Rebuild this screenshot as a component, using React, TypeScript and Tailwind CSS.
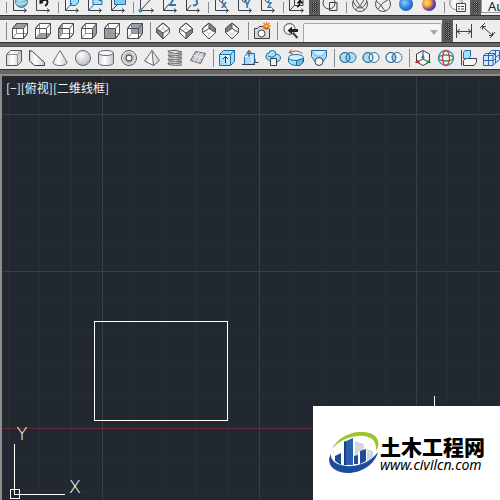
import type { ReactNode } from "react";

type Item = { name: string; art: ReactNode } | "sep";

const INK = "#3b4148";
const STEEL = "#8b9097";
const SKY = "#a9dcf7";
const DEEP = "#1f6fa8";

/** Wireframe cube with one shaded face (orthographic view buttons). */
function Cube({ face }: { face: string }) {
  return (
    <g stroke="#4b5056" fill="none" strokeLinejoin="round">
      <path d="M3.5 8.5L7.5 3.5H18.5V13.5L14.5 18.5H3.5Z" fill="#fff" />
      <path d={face} fill="#9a9fa6" stroke="none" />
      <path d="M7.5 3.5V13.5H18.5M7.5 13.5L3.5 18.5" stroke="#8a8f96" />
      <path d="M3.5 8.5L7.5 3.5H18.5V13.5L14.5 18.5H3.5Z" />
      <path d="M3.5 8.5H14.5V18.5M14.5 8.5L18.5 3.5" />
    </g>
  );
}

/** Isometric view button; `back` shows the far corner instead of the near one. */
function Iso({ face, back }: { face: string; back?: boolean }) {
  return (
    <g stroke="#4b5056" fill="none" strokeLinejoin="round">
      <path d="M10 3L16.5 8.5V12.5L10 19L3.5 12.5V8.5Z" fill="#fff" />
      <path d={face} fill="#80858c" stroke="none" />
      <path d="M10 3L16.5 8.5V12.5L10 19L3.5 12.5V8.5Z" />
      <path d={back ? "M10 3V8.5M10 8.5L3.5 12.5M10 8.5L16.5 12.5" : "M3.5 8.5L10 13L16.5 8.5M10 13V19"} />
      <path d={back ? "M3.5 8.5L10 14L16.5 8.5M10 14V19" : "M10 3V8.5M10 8.5L3.5 12.5M10 8.5L16.5 12.5"} strokeOpacity="0.35" />
    </g>
  );
}

/** Coordinate-system axes used as the base of every UCS button. */
function Axes({ children }: { children?: ReactNode }) {
  return (
    <g fill="none" stroke={INK}>
      <path d="M4.5 2V17.5H17M15 15.5L17.5 17.5L15 19.5" />
      {children}
    </g>
  );
}

function AxisLetter({ letter }: { letter: string }) {
  return (
    <g>
      <path d="M4.5 4V17.5H17M15 15.5L17.5 17.5L15 19.5M8 7L10 9.5L12 8V5" fill="none" stroke={INK} />
      <text
        x="10"
        y="15"
        fontSize="10"
        fontWeight="700"
        fill="#2673b0"
        fontFamily="Open Sans, sans-serif"
      >
        {letter}
      </text>
    </g>
  );
}

function Rings({ mode }: { mode: "union" | "subtract" | "intersect" }) {
  const lens = "M11 6.5A5.5 5.5 0 0 1 11 14.5A5.5 5.5 0 0 1 11 6.5Z";
  return (
    <g stroke="#3a719c" fill="none">
      <circle cx="8" cy="10.5" r="5" fill={mode === "intersect" ? "#f3f6f8" : SKY} />
      <circle cx="14" cy="10.5" r="5" fill={mode === "union" ? SKY : "#f3f6f8"} />
      <path d={lens} fill={mode === "subtract" ? "#f3f6f8" : "#8fd0f2"} />
      <circle cx="8" cy="10.5" r="5" />
    </g>
  );
}

const sphere = (fill: string) => <circle cx="11" cy="11" r="7" fill={fill} />;

const ucsBar: Item[] = [
  "sep",
  {
    name: "World UCS",
    art: (
      <Axes>
        <circle cx="12.5" cy="8.5" r="6" fill="url(#globe)" stroke="#397f98" />
        <path d="M8 6Q12 8 16 5M7 10Q12 13 18 9" stroke="#d9f3fa" />
      </Axes>
    ),
  },
  {
    name: "UCS previous",
    art: (
      <Axes>
        <path d="M9 8.5Q14 5 15.5 8.5Q16 11 13 13" stroke="#111" strokeWidth="1.8" />
        <path d="M7.5 6V11L11.5 10Z" fill="#111" stroke="none" />
      </Axes>
    ),
  },
  "sep",
  {
    name: "Face UCS",
    art: (
      <Axes>
        <path d="M9.5 6L12 3H17.5V9L14.5 12.5H9.5Z" fill={SKY} stroke={DEEP} />
        <path d="M5 17L11 10" stroke={DEEP} />
      </Axes>
    ),
  },
  {
    name: "Object UCS",
    art: (
      <Axes>
        <path d="M9 3.5H15V7.5H18V11.5H9Z" fill={SKY} stroke={DEEP} />
        <path d="M5 17L10 11.5" stroke={DEEP} />
      </Axes>
    ),
  },
  {
    name: "View UCS",
    art: (
      <Axes>
        <path d="M7.5 3.5H18.5V11.5H7.5Z" fill="#7ecbf2" stroke={DEEP} />
        <path d="M5 17L10 12" />
      </Axes>
    ),
  },
  "sep",
  {
    name: "Origin UCS",
    art: (
      <Axes>
        <path d="M5 17L14 7" />
        <circle cx="4.5" cy="17.5" r="1.5" fill="#4ba9df" stroke={DEEP} />
      </Axes>
    ),
  },
  {
    name: "Z axis vector",
    art: (
      <Axes>
        <path d="M5 17L10 11" />
        <path d="M11 5H15L11 12H17" stroke="#2673b0" strokeWidth="1.8" />
      </Axes>
    ),
  },
  {
    name: "3 point UCS",
    art: (
      <Axes>
        <path d="M5 17L9 12" />
        <path d="M11 5Q16 4 14.5 8Q17 12 11 12.5" stroke="#2673b0" strokeWidth="1.8" />
      </Axes>
    ),
  },
  "sep",
  { name: "Rotate about X", art: <AxisLetter letter="x" /> },
  { name: "Rotate about Y", art: <AxisLetter letter="Y" /> },
  { name: "Rotate about Z", art: <AxisLetter letter="z" /> },
  "sep",
  {
    name: "Apply UCS",
    art: (
      <g fill="none" stroke={INK}>
        <path d="M3.5 1V17.5H17M15 15.5L17.5 17.5L15 19.5M4 17L9 12M8.5 4V12.5H17V4" />
        <path d="M11 14Q14 13 14 8M11.5 10.5L14 7.5L16.5 10.5" stroke="#111" strokeWidth="1.5" />
      </g>
    ),
  },
];

const styleBar: Item[] = [
  {
    name: "2D wireframe",
    art: (
      <g fill="none" stroke={INK}>
        <circle cx="9" cy="10" r="6" />
        <path d="M9.5 9.5H17V17.5H9.5Z" />
      </g>
    ),
  },
  "sep",
  {
    name: "3D wireframe",
    art: (
      <g fill="none" stroke="#50555b">
        <circle cx="11" cy="11" r="7.5" />
        <path d="M4 8Q7 15 11 15T18 8M6 5Q10 14 16 17M16 5Q12 14 6 17" />
      </g>
    ),
  },
  {
    name: "Hidden",
    art: (
      <g fill="none" stroke="#50555b">
        <circle cx="11" cy="11" r="7.5" />
        <path d="M4 8Q9 11 13 18M17 6Q9 10 6 16" />
      </g>
    ),
  },
  { name: "Realistic", art: sphere("url(#blueBall)") },
  { name: "Conceptual", art: sphere("url(#warmBall)") },
  "sep",
  {
    name: "Manage visual styles",
    art: (
      <g fill="#f7f7f7" stroke={STEEL}>
        <circle cx="9" cy="10" r="6.5" fill="url(#steel)" />
        <path d="M9.5 10.5H18.5V18.5H9.5Z" stroke={INK} />
        <path d="M11 13.5H13M14 13.5H17M11 16H13M14 16H17" stroke={INK} />
      </g>
    ),
  },
];

const viewBar: Item[] = [
  "sep",
  { name: "Top view", art: <Cube face="M3.5 8.5L7.5 3.5H18.5L14.5 8.5Z" /> },
  { name: "Bottom view", art: <Cube face="M3.5 18.5L7.5 13.5H18.5L14.5 18.5Z" /> },
  { name: "Left view", art: <Cube face="M3.5 8.5L7.5 3.5V13.5L3.5 18.5Z" /> },
  { name: "Right view", art: <Cube face="M14.5 8.5L18.5 3.5V13.5L14.5 18.5Z" /> },
  { name: "Front view", art: <Cube face="M3.5 8.5H14.5V18.5H3.5Z" /> },
  { name: "Back view", art: <Cube face="M7.5 3.5H18.5V13.5H7.5Z" /> },
  "sep",
  { name: "SW isometric", art: <Iso face="M3.5 8.5L10 13V19L3.5 12.5Z" /> },
  { name: "SE isometric", art: <Iso face="M10 13L16.5 8.5V12.5L10 19Z" /> },
  { name: "NE isometric", art: <Iso back face="M10 3L16.5 8.5V12.5L10 8.5Z" /> },
  { name: "NW isometric", art: <Iso back face="M10 3L3.5 8.5V12.5L10 8.5Z" /> },
  "sep",
  {
    name: "Create camera",
    art: (
      <g fill="none" stroke={INK}>
        <path d="M3.5 8.5H6.5L8 6.5H12L14 8.5H18.5V18.5H3.5Z" fill="#d9dbdd" />
        <circle cx="10.5" cy="13.5" r="3.5" fill="#fff" />
        <path d="M15.5 2V10M11.5 6H19.5M12.5 3L18.5 9M18.5 3L12.5 9" stroke="#e8791c" strokeWidth="1.3" />
        <circle cx="15.5" cy="6" r="1.3" fill="#ffd45c" stroke="none" />
      </g>
    ),
  },
  "sep",
  {
    name: "Previous view",
    art: (
      <g fill="none" stroke={STEEL}>
        <circle cx="9.5" cy="9" r="5.5" fill="#f6f6f6" stroke="#777c82" strokeWidth="1.3" />
        <path d="M13 13L17.5 18" stroke={INK} strokeWidth="2" />
        <path d="M7.5 10.5L12 6.5V9H18V12H12V14.5Z" fill="#222" stroke="none" />
      </g>
    ),
  },
];

const dimensionBar: Item[] = [
  {
    name: "Linear dimension",
    art: <path d="M3.5 4V18M18.5 4V18M4 11.5H18M7 9L4 11.5L7 14M15 9L18 11.5L15 14" fill="none" stroke={INK} />,
  },
  {
    name: "Aligned dimension",
    art: <path d="M4 8L9 3M14 18L19 12M6.5 6.5L16.5 15.5M6.5 9.5V6.5H10M16.5 12.5V15.5H13" fill="none" stroke={INK} />,
  },
];

const modelBar: Item[] = [
  {
    name: "Box",
    art: (
      <g fill="url(#steel)" stroke="#565b61" strokeLinejoin="round">
        <path d="M3.5 7.5L7.5 3.5H18.5V14.5L14.5 18.5H3.5Z" />
        <path d="M3.5 7.5H14.5V18.5M14.5 7.5L18.5 3.5" fill="none" stroke={STEEL} />
      </g>
    ),
  },
  {
    name: "Wedge",
    art: (
      <g fill="url(#steel)" stroke={INK} strokeLinejoin="round">
        <path d="M3.5 3.5L6.5 4.5L18.5 15.5V18.5H8.5L3.5 14Z" />
      </g>
    ),
  },
  {
    name: "Cone",
    art: <path d="M11 3.5L18 15Q18 18.5 11 18.5T4 15Z" fill="url(#steel)" stroke="#6c7178" strokeLinejoin="round" />,
  },
  { name: "Sphere", art: <circle cx="11" cy="11" r="7.5" fill="url(#steelBall)" stroke="#646970" /> },
  {
    name: "Cylinder",
    art: (
      <g fill="url(#steel)" stroke="#646970">
        <path d="M3.5 6V16Q4 18.5 11 18.5T18.5 16V6" />
        <ellipse cx="11" cy="6" rx="7.5" ry="2.5" fill="#fafafa" />
      </g>
    ),
  },
  {
    name: "Torus",
    art: (
      <g fill="#e8eaec" stroke="#585d63">
        <circle cx="11" cy="11" r="7.5" />
        <circle cx="11" cy="11" r="5" stroke="#a2a6ab" />
        <circle cx="11" cy="11" r="3" fill="#fff" strokeWidth="1.3" />
      </g>
    ),
  },
  {
    name: "Pyramid",
    art: (
      <g fill="url(#steel)" stroke="#646970" strokeLinejoin="round">
        <path d="M11 3.5L18.5 13.5L12.5 18.5L3.5 14Z" />
        <path d="M11 3.5L12.5 18.5" fill="none" />
      </g>
    ),
  },
  {
    name: "Helix",
    art: (
      <g fill="none" stroke="#555a60">
        <path d="M18 5Q11 2 4 4Q3 6 18 7Q19 9 4 8Q3 10 18 11Q19 13 4 12Q3 14 18 15Q19 17 4 16Q3 19 18 18" />
        <path d="M4 6Q11 7.5 18 5M4 10Q11 11.5 18 9M4 14Q11 15.5 18 13" stroke="#8b9097" />
      </g>
    ),
  },
  {
    name: "Planar surface",
    art: (
      <g fill="#c3c6ca" stroke="#646970" strokeLinejoin="round">
        <path d="M8.5 4.5L18.5 6.5L13.5 16.5L3.5 13.5Z" />
        <path d="M12 5L7 14.5M15 6L10.5 15.5M6.5 8.5L16.5 11" fill="none" stroke="#eef0f2" />
      </g>
    ),
  },
  "sep",
  {
    name: "Extrude",
    art: (
      <g fill={SKY} stroke={DEEP} strokeLinejoin="round">
        <path d="M3.5 7.5L7.5 3.5H18.5V14.5L14.5 18.5H3.5Z" />
        <path d="M3.5 7.5H14.5V18.5M14.5 7.5L18.5 3.5" fill="#d4effc" />
        <path d="M9.5 16V10M7 12L9.5 9.5L12 12" fill="none" stroke="#1d3344" />
      </g>
    ),
  },
  {
    name: "Press and pull",
    art: (
      <g fill={SKY} stroke={DEEP} strokeLinejoin="round">
        <path d="M5.5 9.5L8 6.5H15.5V15L13 17.5H5.5Z" />
        <path d="M5.5 9.5H13V17.5" fill="none" stroke="#f0faff" />
        <path d="M10 10V3.5M7.5 6L10 3.5L12.5 6M3 17.5H16M16 15.5H19.5M16 12V15.5L14 18" fill="none" stroke={INK} />
      </g>
    ),
  },
  {
    name: "Sweep",
    art: (
      <g fill={SKY} stroke={DEEP}>
        <path d="M4 9Q4 6 7 6Q7 3.5 10.5 3.5Q14 3.5 14 7Q18.5 7.5 18.5 11Q18 15 13 15Q7 15 4 11Z" />
        <path d="M6 9Q12 12 14 7" fill="none" />
        <path d="M8.5 11.5H14.5V18.5H8.5Z" fill="#eef4f7" stroke={INK} />
      </g>
    ),
  },
  {
    name: "Revolve",
    art: (
      <g fill={SKY} stroke={DEEP}>
        <path d="M3.5 11V15Q6 18.5 11 18.5T18.5 15V11" />
        <ellipse cx="11" cy="10.5" rx="7.5" ry="3" fill="#d4effc" />
        <path d="M11.5 13.5V18.5H15L18 15V11.5Z" fill="#73bce5" />
        <path d="M17.5 6.5Q12 2 4.5 5.5M6.5 2.5L4 5.5L8 7" fill="none" stroke="#a8542f" />
      </g>
    ),
  },
  {
    name: "Loft",
    art: (
      <g fill={SKY} stroke={DEEP} strokeLinejoin="round">
        <path d="M3.5 3.5H18.5V9.5L14 16H8L3.5 9.5Z" />
        <path d="M4 4L8 9H14L18 4" fill="#d4effc" stroke="#63b2dc" />
        <circle cx="11" cy="14.5" r="4" fill="#eef4f7" stroke={INK} />
      </g>
    ),
  },
  "sep",
  { name: "Union", art: <Rings mode="union" /> },
  { name: "Subtract", art: <Rings mode="subtract" /> },
  { name: "Intersect", art: <Rings mode="intersect" /> },
  "sep",
  {
    name: "3D move",
    art: (
      <g fill="#f8f8f8" stroke={INK} strokeLinejoin="round">
        <path d="M11 3.5L17.5 7V15L11 18.5L4.5 15V7Z" />
        <path d="M11 4V12L5 15M11 12L17 15" fill="none" />
        <path d="M9 11L11 8L13 11Z" fill="#286fc0" stroke="none" />
        <path d="M3 16L5 12.5L8 16Z" fill="#bb2636" stroke="none" />
        <path d="M19 16L17 12.5L14 16Z" fill="#218b43" stroke="none" />
      </g>
    ),
  },
  {
    name: "3D rotate",
    art: (
      <g fill="none" strokeWidth="1.4">
        <circle cx="11" cy="11" r="7.5" fill="#f7fbfd" stroke="#3f92c6" />
        <ellipse cx="11" cy="11" rx="7.5" ry="3" stroke="#3c9b56" />
        <ellipse cx="11" cy="11" rx="3.5" ry="7.5" stroke="#d93c3c" />
      </g>
    ),
  },
  {
    name: "3D align",
    art: (
      <g fill="#f6f6f6" stroke={INK} strokeLinejoin="round">
        <path d="M3.5 3V18.5" />
        <path d="M5.5 13.5L8 11.5H18.5V15.5L16 18.5H5.5Z" />
        <path d="M5.5 5.5L7 3.5H12.5V9.5L10.5 11.5H5.5Z" fill={SKY} stroke={DEEP} />
      </g>
    ),
  },
  {
    name: "3D array",
    art: (
      <g fill="#d6eafc" stroke="#2465c0" strokeLinejoin="round">
        <path d="M8.5 5.5L10.5 3.5H18.5V12.5L16 15H8.5Z" />
        <path d="M2.5 8.5L4.5 6.5H14.5V16L12 18.5H2.5Z" />
        <path d="M2.5 8.5H12V18.5M12 8.5L14.5 6.5M7.5 7V18M2.5 13.5H12L14.5 11.5M14.5 3.5V6.5M18 8L15 10" fill="none" />
      </g>
    ),
  },
];

function Separator() {
  return (
    <div className="flex w-1.5 shrink-0 justify-center self-stretch py-0.5">
      <div className="w-px bg-[#888c90]" />
    </div>
  );
}

function Tools({ label, items, className = "" }: { label: string; items: Item[]; className?: string }) {
  return (
    <div role="toolbar" aria-label={label} className={`flex shrink-0 items-end bg-[#ededed] ${className}`}>
      {items.map((item, i) =>
        item === "sep" ? (
          <Separator key={i} />
        ) : (
          <button key={i} type="button" aria-label={item.name} className="shrink-0 hover:bg-sky-100">
            <svg width="23" height="22" viewBox="0 0 23 22" className="block" aria-hidden>
              {item.art}
            </svg>
          </button>
        ),
      )}
    </div>
  );
}

function Grip() {
  return (
    <div className="flex w-[11px] shrink-0 justify-center bg-[#5a5b5a] py-0.5">
      <div className="w-[5px] bg-[conic-gradient(#9a9a9a_25%,#2b2b2b_0_50%,#5a5a5a_0_75%,#2b2b2b_0)] bg-size-[2px_2px]" />
    </div>
  );
}

function Gradients() {
  return (
    <svg width="0" height="0" className="absolute" aria-hidden>
      <defs>
        <linearGradient id="steel">
          <stop offset="0" stopColor="#d3d6da" />
          <stop offset="0.4" stopColor="#ffffff" />
          <stop offset="1" stopColor="#c3c7cc" />
        </linearGradient>
        <radialGradient id="steelBall" cx="0.38" cy="0.32" r="0.75">
          <stop offset="0" stopColor="#ffffff" />
          <stop offset="1" stopColor="#b3b8c0" />
        </radialGradient>
        <radialGradient id="globe" cx="0.4" cy="0.3" r="0.8">
          <stop offset="0" stopColor="#c8edf5" />
          <stop offset="1" stopColor="#4697b0" />
        </radialGradient>
        <radialGradient id="blueBall" cx="0.4" cy="0.4" r="0.7">
          <stop offset="0" stopColor="#8cc9ff" />
          <stop offset="0.6" stopColor="#2d80d8" />
          <stop offset="1" stopColor="#1b56a8" />
        </radialGradient>
        <radialGradient id="warmBall" cx="0.35" cy="0.4" r="0.65">
          <stop offset="0" stopColor="#ffe08a" />
          <stop offset="0.45" stopColor="#f0a02c" />
          <stop offset="0.75" stopColor="#7b4a9c" />
          <stop offset="1" stopColor="#3a3fa8" />
        </radialGradient>
      </defs>
    </svg>
  );
}

const gridSteps = Array.from({ length: 80 }, (_, i) => i - 3);

/** Drawing area: grid, X axis, the drawn rectangle and the cursor. */
function Drawing() {
  return (
    <svg className="absolute inset-0 h-full w-full" shapeRendering="crispEdges" aria-hidden>
      {gridSteps.map((n) => {
        const major = n % 5 === 0;
        const stroke = major ? "#373e47" : "#262d36";
        const x = Math.round(100 + n * 31.4) + 0.5;
        const y = Math.round(38 + n * 31.4) + 0.5;
        return (
          <g key={n} stroke={stroke}>
            <line x1={x} x2={x} y1="0" y2="100%" />
            <line x1="0" x2="100%" y1={y} y2={y} />
          </g>
        );
      })}
      <line x1="0" x2="100%" y1="352.5" y2="352.5" stroke="#6e2537" />
      <rect x="92.5" y="245.5" width="133" height="99" fill="none" stroke="#fff" />
      <line x1="432.5" x2="432.5" y1="320" y2="340" stroke="#fff" />
    </svg>
  );
}

function UcsIcon() {
  return (
    <svg width="90" height="76" viewBox="0 0 90 76" className="absolute bottom-0 left-0" aria-hidden>
      <g fill="none" stroke="#fff" shapeRendering="crispEdges">
        <path d="M12.5 20V70.5H63" />
        <rect x="8.5" y="65.5" width="9" height="9" />
      </g>
      <g fill="#fff" fontFamily="DejaVu Sans, sans-serif" fontWeight="200" fontSize="18" textAnchor="middle">
        <text x="20" y="16">Y</text>
        <text x="73" y="69">X</text>
      </g>
    </svg>
  );
}

function Watermark() {
  return (
    <a
      href="#civilcn"
      className="absolute right-0 bottom-0 flex h-[94px] w-[187px] items-center bg-white pl-4 text-black"
    >
      <svg width="51" height="42" viewBox="0 0 51 42" className="shrink-0" aria-hidden>
        <path d="M26 9L35 12V18L29 20V30H26Z" fill="#d3d7db" />
        <path d="M38 17L44 19V25L38 31Z" fill="#d3d7db" />
        <path d="M6 24L12 21V33L6 29Z" fill="#1d4c9a" />
        <path d="M15 10L24 6V33H15Z" fill="#2a60ad" />
        <path d="M15 10L17 9V33H15Z" fill="#173f86" />
        <path d="M25 24L29 23V32H25ZM31 19L37 17V29L31 32Z" fill="#1d4c9a" />
        <path d="M3 17C9 4 27 -3 40 1C51 4 51 14 47 19C48 11 44 5 35 4C23 3 11 8 3 17Z" fill="#9ac626" />
        <path d="M2 22C1 31 12 35 23 34C34 33 43 28 49 20C46 32 33 41 19 41C5 41 -4 32 2 22Z" fill="#1d4c9a" />
      </svg>
      <span className="flex flex-col pt-0.5">
        <span className="font-['Noto_Sans_CJK_SC',sans-serif] text-[21px] leading-[21px] font-black whitespace-nowrap">
          土木工程网
        </span>
        <span className="font-['Noto_Sans',sans-serif] text-sm leading-4 font-normal italic">www.civilcn.com</span>
      </span>
    </a>
  );
}

export default function App() {
  return (
    <div className="flex min-h-screen flex-col overflow-hidden bg-[#666765]">
      <Gradients />
      <header className="flex flex-col">
        <div className="flex h-[15px] items-stretch overflow-hidden">
          <Tools label="UCS" items={ucsBar} className="pl-[3px]" />
          <Grip />
          <Tools label="Visual styles" items={styleBar} />
          <Grip />
          <div className="flex flex-1 bg-[#ededed] pb-0.5">
            <button
              type="button"
              className="flex flex-1 items-center border-b border-l border-[#9a9a9a] bg-[#f4f4f4] pl-1.5 font-['Noto_Sans',sans-serif] text-[13px] leading-3 text-[#222]"
            >
              Au
            </button>
          </div>
        </div>
        <div className="h-[5px] border-t border-b border-t-[#333] border-b-[#505050]" />
        <div className="flex h-[22px] overflow-hidden">
          <Tools label="Views" items={viewBar} className="pl-[3px]" />
          <div className="relative w-[139px] shrink-0 bg-[#ededed]">
            <select
              aria-label="Named view"
              className="h-full w-full appearance-none rounded-xs border border-[#a8a8a8] bg-[#f5f5f5] px-1 text-xs"
            >
              <option value="" />
            </select>
            <svg width="8" height="5" viewBox="0 0 8 5" className="pointer-events-none absolute top-2.5 right-1" aria-hidden>
              <path d="M0 0H8L4 5Z" fill="#a9a9a9" />
            </svg>
          </div>
          <Grip />
          <Tools label="Dimension" items={dimensionBar} className="flex-1" />
        </div>
        <div className="h-[5px] border-t border-b border-t-[#333] border-b-[#505050]" />
        <div className="flex h-[22px] overflow-hidden">
          <Tools label="Modeling" items={modelBar} className="flex-1 pl-[3px]" />
        </div>
        <div className="h-[7px] border-t border-b-2 border-t-[#333] border-b-[#8d8e8a]" />
      </header>

      <main className="flex flex-1 border-l-2 border-[#8d8e8a]">
        <div className="relative min-h-[424px] flex-1 overflow-hidden bg-[#212830]">
          <Drawing />
          <div className="relative flex pt-1 pl-1 font-['Noto_Sans_CJK_SC',sans-serif] text-xs leading-4 text-[#f2f2f2]">
            <button type="button">[−]</button>
            <button type="button">[俯视]</button>
            <button type="button">[二维线框]</button>
          </div>
          <UcsIcon />
          <Watermark />
        </div>
      </main>
    </div>
  );
}
